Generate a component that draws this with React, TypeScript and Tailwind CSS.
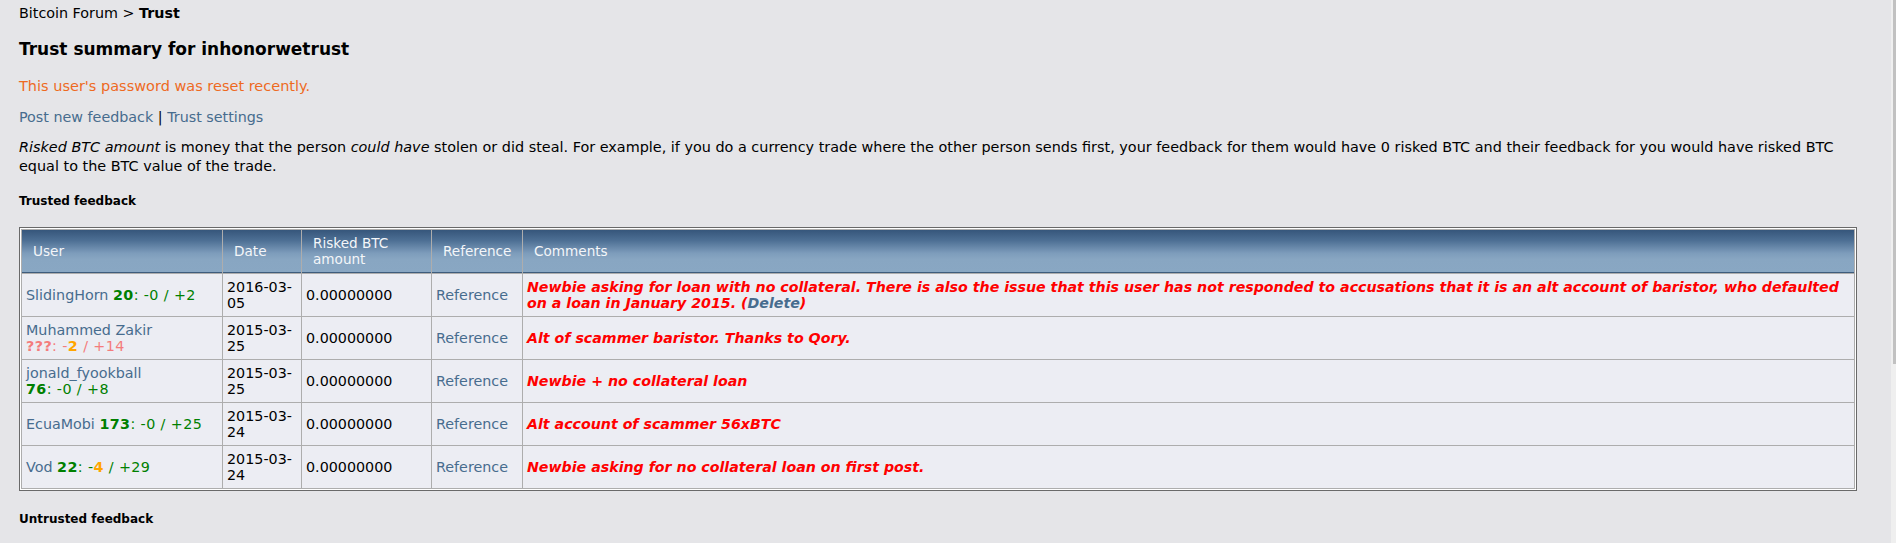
import React from "react";

const G = "text-[#008000]";
const GB = "font-bold text-[#008000]";
const OB = "font-bold text-[#FFA500]";
const S = "text-[#F47C7C]";
const SB = "font-bold text-[#F47C7C]";
const LINK = "text-[#476C8E]";

type Row = {
  user: React.ReactNode;
  date: string;
  comment: React.ReactNode;
};

function Score({ children }: { children: React.ReactNode }) {
  return <span className="whitespace-nowrap tracking-[0.4px]">{children}</span>;
}

const rows: Row[] = [
  {
    user: (
      <>
        <span className={LINK}>SlidingHorn</span>{" "}
        <Score>
          <span className={GB}>20</span>
          <span className={G}>: -0 / +2</span>
        </Score>
      </>
    ),
    date: "2016-03-05",
    comment: (
      <>
        Newbie asking for loan with no collateral. There is also the issue that this user has not responded to
        accusations that it is an alt account of baristor, who defaulted on a loan in January 2015. (
        <span className={LINK}>Delete</span>)
      </>
    ),
  },
  {
    user: (
      <>
        <span className={LINK}>Muhammed Zakir</span>{" "}
        <Score>
          <span className={SB}>???</span>
          <span className={S}>: -</span>
          <span className={OB}>2</span>
          <span className={S}> / +14</span>
        </Score>
      </>
    ),
    date: "2015-03-25",
    comment: <>Alt of scammer baristor. Thanks to Qory.</>,
  },
  {
    user: (
      <>
        <span className={LINK}>jonald_fyookball</span>{" "}
        <Score>
          <span className={GB}>76</span>
          <span className={G}>: -0 / +8</span>
        </Score>
      </>
    ),
    date: "2015-03-25",
    comment: <>Newbie + no collateral loan</>,
  },
  {
    user: (
      <>
        <span className={LINK}>EcuaMobi</span>{" "}
        <Score>
          <span className={GB}>173</span>
          <span className={G}>: -0 / +25</span>
        </Score>
      </>
    ),
    date: "2015-03-24",
    comment: <>Alt account of scammer 56xBTC</>,
  },
  {
    user: (
      <>
        <span className={LINK}>Vod</span>{" "}
        <Score>
          <span className={GB}>22</span>
          <span className={G}>: -</span>
          <span className={OB}>4</span>
          <span className={G}> / +29</span>
        </Score>
      </>
    ),
    date: "2015-03-24",
    comment: <>Newbie asking for no collateral loan on first post.</>,
  },
];

const headCell =
  "flex items-center px-[11px] py-[5px] text-[13.6px] leading-[16px] text-[#F4F6F9] border-b border-[#3E5C7C] bg-[linear-gradient(to_bottom,#36567b_0%,#4d6f94_25%,#7d9cbb_55%,#88a6c2_70%,#89a7c3_100%)]";
const bodyCell = "flex items-center px-[4px] py-[5px] leading-[16px] bg-[#ECEDF3]";

export default function App() {
  return (
    <div className="flex min-h-screen bg-[#E5E5E8] font-['DejaVu_Sans',Verdana,sans-serif] text-[14.3px] text-black">
      <div className="flex-1 pl-[19px] pt-[5px]">
        <div className="w-[1838px]">
          <div className="leading-[17px]">
            Bitcoin Forum &gt; <b>Trust</b>
          </div>
          <h1 className="mt-[18px] text-[17px] leading-[19px] font-bold">Trust summary for inhonorwetrust</h1>
          <div className="mt-[19px] text-[14.5px] leading-[17px] text-[#EE6A1F]">
            This user's password was reset recently.
          </div>
          <div className="mt-[14px] leading-[17px]">
            <span className={LINK}>Post new feedback</span> | <span className={LINK}>Trust settings</span>
          </div>
          <p className="mt-[12px] text-[14.4px] leading-[18.5px]">
            <i>Risked BTC amount</i> is money that the person <i>could have</i> stolen or did steal. For example, if
            you do a currency trade where the other person sends first, your feedback for them would have 0 risked BTC
            and their feedback for you would have risked BTC equal to the BTC value of the trade.
          </p>
          <h3 className="mt-[19px] text-[12px] leading-[14px] font-bold">Trusted feedback</h3>

          <div className="mt-[19px] border border-[#696969] bg-white p-px">
            <div className="grid grid-cols-[200px_78px_129px_90px_1fr] gap-px bg-[#ADADAD] p-px">
              <div className={headCell}>User</div>
              <div className={headCell}>Date</div>
              <div className={headCell}>Risked BTC amount</div>
              <div className={headCell}>Reference</div>
              <div className={headCell}>Comments</div>
              {rows.map((r, i) => (
                <React.Fragment key={i}>
                  <div className={bodyCell}>
                    <div>{r.user}</div>
                  </div>
                  <div className={bodyCell}>
                    <div>
                      {r.date.slice(0, 8)}
                      <wbr />
                      {r.date.slice(8)}
                    </div>
                  </div>
                  <div className={bodyCell}>0.00000000</div>
                  <div className={bodyCell}>
                    <span className={LINK}>Reference</span>
                  </div>
                  <div className={bodyCell}>
                    <div className="font-bold italic text-[14.2px] text-[#FF0000]">{r.comment}</div>
                  </div>
                </React.Fragment>
              ))}
            </div>
          </div>

          <h3 className="mt-[21px] text-[12px] leading-[14px] font-bold">Untrusted feedback</h3>
        </div>
      </div>
      <div className="flex w-[5px] justify-end bg-[#EFEFEF]">
        <div className="h-[364px] w-[3px] bg-[#C1C1C1]" />
      </div>
    </div>
  );
}
